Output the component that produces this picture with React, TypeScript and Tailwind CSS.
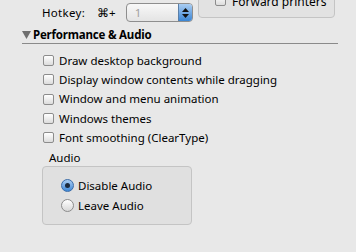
import { useState } from "react";

const Checkbox = () => (
    <span className="inline-block w-[11px] h-[11px] rounded-[2px] border border-[#8c8c8c] bg-gradient-to-b from-white to-[#dcdcdc] shrink-0" />
);

const Radio = ({ checked }: { checked: boolean }) =>
    checked ? (
        <span className="flex items-center justify-center w-[13px] h-[13px] rounded-full border border-[#3a6ca8] bg-gradient-to-b from-[#a9cdf2] to-[#3d87d6] shrink-0">
            <span className="w-[5px] h-[5px] rounded-full bg-[#1b2a3c]" />
        </span>
    ) : (
        <span className="inline-block w-[13px] h-[13px] rounded-full border border-[#8c8c8c] bg-gradient-to-b from-white to-[#d8d8d8] shrink-0" />
    );

const options = [
    "Draw desktop background",
    "Display window contents while dragging",
    "Window and menu animation",
    "Windows themes",
    "Font smoothing (ClearType)",
];

export default function App() {
    const [audio, setAudio] = useState("disable");

    return (
        <div className="w-[356px] h-[252px] overflow-hidden bg-[#e8e8e8] text-[11.5px] text-black font-['Noto_Sans',sans-serif] leading-none whitespace-nowrap">
            {/* top row */}
            <div className="flex items-start h-[28px]">
                <div className="flex items-center pl-[42px] pt-[3px] h-[22px]">
                    <span className="tracking-[0.3px]">Hotkey:</span>
                    <span className="ml-[12px]">⌘+</span>
                    <div className="ml-[10px] w-[67px] h-[19px] flex rounded-[4px] border border-[#8e8e8e] bg-gradient-to-b from-[#f8f8f8] to-[#e4e4e4] overflow-hidden">
                        <span className="flex-1 pl-[8px] flex items-center text-[#a0a0a0]">1</span>
                        <span className="w-[14px] flex flex-col items-center justify-center gap-[2px] bg-gradient-to-b from-[#a9cdf2] to-[#3a86d4] border-l border-[#5a7fa8]">
                            <svg width="7" height="4" viewBox="0 0 7 4"><path d="M3.5 0L7 4H0z" fill="#111" /></svg>
                            <svg width="7" height="4" viewBox="0 0 7 4"><path d="M0 0h7L3.5 4z" fill="#111" /></svg>
                        </span>
                    </div>
                </div>
                <div className="ml-auto mr-[21px] -mt-[20px] w-[137px] h-[38px] rounded-[4px] border border-[#c4c4c4] bg-[#e2e2e2] flex items-start pl-[16px] pt-[14px]">
                    <Checkbox />
                    <span className="ml-[6px] mt-[1px] text-[12px]">Forward printers</span>
                </div>
            </div>

            {/* section header */}
            <div className="flex items-center h-[13px] pl-[22px] font-bold">
                <svg width="9" height="8" viewBox="0 0 9 8" className="mr-[2px]"><path d="M0 0h9L4.5 8z" fill="#6f6f6f" /></svg>
                <span className="tracking-[-0.2px]">Performance &amp; Audio</span>
            </div>
            <div className="ml-[22px] mt-[2px] w-[316px] h-px bg-[#8a8a8a]" />

            {/* checkboxes */}
            <div className="pl-[43px] pt-[11px] flex flex-col gap-[8.25px]">
                {options.map((o) => (
                    <label key={o} className="flex items-center h-[11px]">
                        <Checkbox />
                        <span className="ml-[5px]">{o}</span>
                    </label>
                ))}
            </div>

            {/* audio group */}
            <div className="pl-[49px] mt-[9px] h-[12px] flex items-center">Audio</div>
            <div className="ml-[42px] mt-[2px] w-[150px] h-[59px] rounded-[4px] border border-[#c4c4c4] bg-[#e0e0e0] pl-[18px] pt-[12px] flex flex-col gap-[7px]">
                <label className="flex items-center h-[13px]" onClick={() => setAudio("disable")}>
                    <Radio checked={audio === "disable"} />
                    <span className="ml-[4px]">Disable Audio</span>
                </label>
                <label className="flex items-center h-[13px]" onClick={() => setAudio("leave")}>
                    <Radio checked={audio === "leave"} />
                    <span className="ml-[4px]">Leave Audio</span>
                </label>
            </div>
        </div>
    );
}
